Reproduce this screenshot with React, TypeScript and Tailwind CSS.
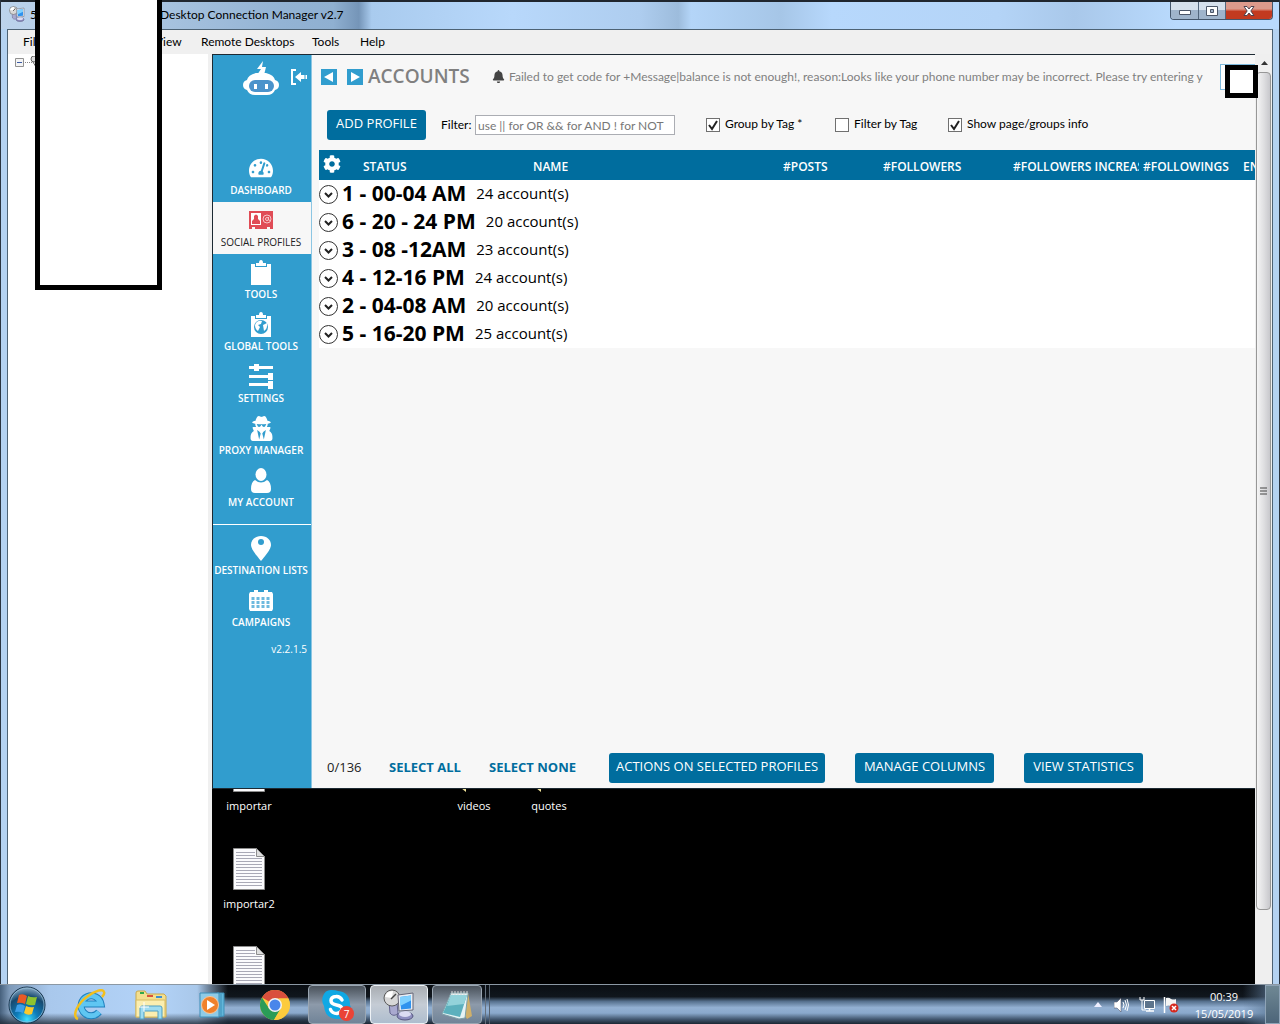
import type { ReactNode } from "react";
import { FaBell, FaCog, FaTachometerAlt, FaUserSecret } from "react-icons/fa";

/* ---------- icons ---------- */

function ConnectionIcon({ className }: { className: string }) {
  return (
    <svg viewBox="0 0 32 32" className={className} aria-hidden="true">
      <ellipse cx="22" cy="27" rx="8" ry="4" fill="#8f8fc0" stroke="#55557f" />
      <ellipse cx="22" cy="25" rx="6" ry="3" fill="#dcdcf2" />
      <path d="M6 13l8 1 1 10c-2 3-6 3-8 0z" fill="#a9a9cf" stroke="#62628c" />
      <circle cx="9" cy="9" r="8" fill="#d7d7d7" stroke="#5b5b5b" />
      <path d="M2 8a8 8 0 0 1 8-6l-1 7z" fill="#fff" />
      <path d="M8 10l5-5" stroke="#444" strokeWidth="1.5" />
      <path d="M15 6l15-2v17l-14 1z" fill="#e9eef5" stroke="#667" />
      <path d="M17 8l11-1.500v13l-10 1z" fill="#2f92ee" />
      <path d="M17 8l11-1.500v5L17 17z" fill="#7fd0ff" />
    </svg>
  );
}

function RobotIcon() {
  return (
    <svg viewBox="0 0 36 34" className="h-[34px] w-9" aria-hidden="true">
      <path d="M20 0l-6 8h4l-4 6h7l2-8h-4z" fill="#fff" />
      <path d="M13 12h10q8 2 9 7 4 1 4 5t-4 5q-2 5-8 5H12q-6 0-8-5-4-1-4-5t4-5q1-5 9-7z" fill="#fff" />
      <rect x="6" y="19" width="25" height="12" rx="6" fill="#4b93cb" />
      <rect x="11" y="23" width="3" height="5" fill="#fff" />
      <rect x="22" y="23" width="3" height="5" fill="#fff" />
    </svg>
  );
}

function CollapseIcon() {
  return (
    <svg viewBox="0 0 16 16" className="size-4" fill="#fff" aria-hidden="true">
      <path d="M0 0h5v2H2v12h3v2H0z" />
      <path d="M4 8l6-5v3h3v4h-3v3z" />
      <path d="M13.500 6h1v4h-1zM15 6h1v4h-1z" />
    </svg>
  );
}

function CardIcon() {
  return (
    <svg viewBox="0 0 24 19" className="h-[19px] w-6" aria-hidden="true">
      <path d="M0 0h24v18h-3v-2h-3v2H6v-2H3v2H0z" fill="#e04c56" />
      <path d="M2 2h10v12H2z" fill="#fff" />
      <path d="M5 5q2-3 4 0v3l2 2v3H3v-3l2-2z" fill="#e04c56" />
      <circle cx="18" cy="8" r="4" fill="none" stroke="#f6c5c8" />
      <circle cx="18" cy="8" r="1.500" fill="none" stroke="#f6c5c8" />
      <path d="M19.500 6v3l2 .5" fill="none" stroke="#f6c5c8" />
    </svg>
  );
}

function ClipboardIcon({ globe }: { globe?: boolean }) {
  return (
    <svg viewBox="0 0 22 25" className="h-[25px] w-[22px]" aria-hidden="true">
      <path d="M1 4h4v3h12V4h4v21H1z" fill="#fff" />
      <path d="M6 3h3q0-3 2-3t2 3h3v3H6z" fill="#fff" />
      {globe && (
        <>
          <circle cx="11" cy="15" r="7" fill="#319dce" />
          <path d="M5 13q2-5 7-4l-1 3-3 1 2 2-2 4q-3-2-3-6zM13 13l4-2q1 5-3 8z" fill="#fff" />
        </>
      )}
    </svg>
  );
}

function SlidersIcon() {
  return (
    <svg viewBox="0 0 24 25" className="h-[25px] w-6" fill="#fff" aria-hidden="true">
      <path d="M0 2h5V0h5v2h14v3H10v2H5V5H0zM0 11h19V9h5v7h-5v-2H0zM0 19h19v-2h5v8h-5v-3H0z" />
    </svg>
  );
}

function PersonIcon() {
  return (
    <svg viewBox="0 0 20 25" className="h-[25px] w-5" fill="#fff" aria-hidden="true">
      <ellipse cx="10" cy="6.500" rx="5.500" ry="6.500" />
      <path d="M4 12q6 5 12 0 4 2 4 9 0 4-4 4H4q-4 0-4-4 0-7 4-9z" />
    </svg>
  );
}

function PinIcon() {
  return (
    <svg viewBox="0 0 20 25" className="h-[25px] w-5" aria-hidden="true">
      <path d="M10 0c6 0 10 4 10 9 0 4-5 10-10 16C5 19 0 13 0 9c0-5 4-9 10-9z" fill="#fff" />
      <circle cx="10" cy="6" r="3" fill="#319dce" />
    </svg>
  );
}

function CalendarIcon() {
  return (
    <svg viewBox="0 0 24 21" className="h-[21px] w-6" aria-hidden="true">
      <path d="M1 2h4V0h4v2h6V0h4v2h4l1 2v15l-1 2H1l-1-2V4z" fill="#fff" />
      <path
        d="M4 7v3M9 7v3M14 7v3M19 7v3M4 11v3M9 11v3M14 11v3M19 11v3M4 15v3M9 15v3M14 15v3M19 15v3"
        stroke="#6db9de"
        strokeWidth="3"
      />
    </svg>
  );
}

function TextFileIcon() {
  return (
    <svg viewBox="0 0 32 42" className="h-[42px] w-8 shrink-0" aria-hidden="true">
      <path d="M.5.500h23l8 8v33H.5z" fill="#fbfbfd" stroke="#8d8d8d" />
      <path d="M23.500.500v8h8z" fill="#dedede" stroke="#8d8d8d" />
      <path
        d="M3 4.500h19M3 7.500h19M3 10.500h26M3 13.500h26M3 16.500h26M3 19.500h26M3 22.500h26M3 25.500h26M3 28.500h26M3 31.500h26M3 34.500h26M3 37.500h26"
        stroke="#a9a9b6"
      />
    </svg>
  );
}

function FolderTip() {
  return (
    <svg viewBox="0 0 32 42" className="h-[42px] w-8 shrink-0" aria-hidden="true">
      <path d="M3 38h5v4z" fill="#f1e39a" />
    </svg>
  );
}

function StartOrb() {
  return (
    <svg viewBox="0 0 38 38" className="size-[38px]" aria-hidden="true">
      <defs>
        <radialGradient id="orb" cx="50%" cy="90%" r="85%">
          <stop offset="0" stopColor="#3fe0ff" />
          <stop offset=".35" stopColor="#0d7dbb" />
          <stop offset=".75" stopColor="#174a70" />
          <stop offset="1" stopColor="#7a9cb8" />
        </radialGradient>
      </defs>
      <circle cx="19" cy="19" r="18" fill="url(#orb)" stroke="#16324a" />
      <circle cx="19" cy="19" r="17" fill="none" stroke="#9cc4de" strokeOpacity=".7" />
      <path d="M11 9q4-2 8 1l-2 8q-4-2-8-1z" fill="#ea5a24" />
      <path d="M20 10q4 2 9 1l-2 8q-5 1-9-1z" fill="#8fc32f" />
      <path d="M9 19q4-2 8 1l-2 7q-4-2-8-1z" fill="#3c9ee8" />
      <path d="M18 20q4 2 8 1l-2 7q-4 2-8-1z" fill="#fcc92c" />
    </svg>
  );
}

function ExplorerE() {
  return (
    <svg viewBox="0 0 32 32" className="size-8" fill="none" aria-hidden="true">
      <path d="M25 23a10 10 0 1 1 2-8H9" stroke="#1f80bd" strokeWidth="7" />
      <path d="M25 23a10 10 0 1 1 2-8H9" stroke="#5fc6f2" strokeWidth="5" />
      <path d="M4 30C-3 27 4 14 14 7c7-5 15-8 16-4 1 2-1 4-2 5" stroke="#f2bf1e" strokeWidth="2.500" />
    </svg>
  );
}

function FoldersIcon() {
  return (
    <svg viewBox="0 0 32 30" className="h-[30px] w-8" aria-hidden="true">
      <path d="M1 3q0-2 2-2h7l2 3h17l2 2v21H1z" fill="#f3df8f" stroke="#c9a94c" />
      <path d="M5 2h4v2H5z" fill="#2fa84b" />
      <path d="M12 5h6v2h-6z" fill="#d9533b" />
      <path d="M21 6h6v2h-6z" fill="#3f8fd0" />
      <path d="M1 10h29v17H1z" fill="#fbeeb0" stroke="#d7bb63" />
      <path d="M5 29V18q0-2 2-2h18q2 0 2 2v11h-4v-8H9v8z" fill="#9edcf1" stroke="#4e9fc2" />
      <path d="M9 12v10M4 17h10" stroke="#fff" />
    </svg>
  );
}

function PlayerIcon() {
  return (
    <svg viewBox="0 0 28 26" className="h-[26px] w-7" aria-hidden="true">
      <path d="M18 1h7v23l-7 1z" fill="#62b6da" stroke="#3d8fb8" />
      <path d="M1 1h19v24H1zM22 2v22" fill="#8fcbe6" stroke="#3d8fb8" />
      <circle cx="11" cy="13" r="8.500" fill="#f0812a" stroke="#f8c69a" />
      <path d="M8 8l8 5-8 5z" fill="#fff" />
    </svg>
  );
}

function ChromeLogo() {
  return (
    <svg viewBox="0 0 30 30" className="size-[30px]" aria-hidden="true">
      <circle cx="15" cy="15" r="15" fill="#fccb3d" />
      <path d="M15 15L2 7.500A15 15 0 0 1 28 7.500L28.500 8.500H15z" fill="#d94f3d" />
      <path d="M2 7.500A15 15 0 0 0 14 30L20.800 18.500 9 18.500z" fill="#2a9c57" />
      <path d="M28.300 8.500A15 15 0 0 1 14 30L20.800 18.500 19 8.500z" fill="#fccb3d" />
      <circle cx="15" cy="15" r="7" fill="#f3f3f3" />
      <circle cx="15" cy="15" r="5.500" fill="#4a86ea" />
    </svg>
  );
}

function SkypeLogo() {
  return (
    <svg viewBox="0 0 30 30" className="size-[30px]" aria-hidden="true">
      <path d="M9 0q5 0 7 1 12 1 12 14 2 3 1 7-2 8-11 7Q3 30 2 16-1 11 1 6q2-6 8-6z" fill="#10a8e4" />
      <path
        d="M20 10q-2-4-6-3.500-5 .5-5 4t5.500 4.500 5.500 4-5 4.500q-5 0-6.500-4"
        fill="none"
        stroke="#fff"
        strokeWidth="3.500"
        strokeLinecap="round"
      />
    </svg>
  );
}

function NotepadIcon() {
  return (
    <svg viewBox="0 0 32 32" className="size-8" aria-hidden="true">
      <path d="M27 4l4 23-5 3-3-5z" fill="#d0b06a" />
      <path d="M10 4h17l-3 25-6 1L1 25z" fill="#e6f3f5" stroke="#7da0a8" />
      <path d="M10 6h16l-7 22L2 24z" fill="#5cb0bd" />
      <path d="M10 6h16l-3 9-17 2z" fill="#93d2da" />
      <path d="M11 2v4M14 2v4M17 2v4M20 2v4M23 2v4M26 2v4" stroke="#d6d6d6" />
    </svg>
  );
}

/* ---------- data ---------- */

const mainLinks: { label: string; icon: ReactNode; active?: boolean }[] = [
  { label: "DASHBOARD", icon: <FaTachometerAlt size={24} /> },
  { label: "SOCIAL PROFILES", icon: <CardIcon />, active: true },
  { label: "TOOLS", icon: <ClipboardIcon /> },
  { label: "GLOBAL TOOLS", icon: <ClipboardIcon globe /> },
  { label: "SETTINGS", icon: <SlidersIcon /> },
  { label: "PROXY MANAGER", icon: <FaUserSecret size={25} /> },
  { label: "MY ACCOUNT", icon: <PersonIcon /> },
];

const listLinks = [
  { label: "DESTINATION LISTS", icon: <PinIcon /> },
  { label: "CAMPAIGNS", icon: <CalendarIcon /> },
];

const groups = [
  { name: "1 - 00-04 AM", count: 24 },
  { name: "6 - 20 - 24 PM", count: 20 },
  { name: "3 - 08 -12AM", count: 23 },
  { name: "4 - 12-16 PM", count: 24 },
  { name: "2 - 04-08 AM", count: 20 },
  { name: "5 - 16-20 PM", count: 25 },
];

/* ---------- pieces ---------- */

function NavLink({ label, icon, active }: { label: string; icon: ReactNode; active?: boolean }) {
  return (
    <a
      href="#"
      className={
        active
          ? "flex h-[52px] flex-col items-center bg-[#f7f7f7] pr-0.5 text-[10px] text-[#222]"
          : "flex h-[52px] flex-col items-center pr-0.5 text-[10px] font-semibold text-white"
      }
    >
      <span className="flex h-8 items-center justify-center pt-1">{icon}</span>
      <span className="leading-4 whitespace-nowrap">{label}</span>
    </a>
  );
}

function CheckOption({ label, className, checked }: { label: string; className: string; checked?: boolean }) {
  return (
    <label className={`flex shrink-0 items-center gap-[5px] whitespace-nowrap ${className}`}>
      <span className="grid shrink-0 pt-0.5">
        <input
          type="checkbox"
          defaultChecked={checked}
          className="peer col-start-1 row-start-1 size-3.5 appearance-none border border-[#707070] bg-white"
        />
        <svg
          viewBox="0 0 14 14"
          className="pointer-events-none invisible col-start-1 row-start-1 size-3.5 peer-checked:visible"
          aria-hidden="true"
        >
          <path d="M3 7l3 4 5-8" fill="none" stroke="#222" strokeWidth="2" />
        </svg>
      </span>
      {label}
    </label>
  );
}

function BlueButton({ children, className }: { children: ReactNode; className: string }) {
  return (
    <button
      className={`h-[30px] shrink-0 rounded-[3px] bg-[#006d9e] pb-0.5 font-['Open_Sans',sans-serif] text-[13px] whitespace-nowrap text-white ${className}`}
    >
      {children}
    </button>
  );
}

function DesktopFile({ label, icon, className }: { label: string; icon: ReactNode; className: string }) {
  return (
    <div className={`absolute flex w-[74px] flex-col items-center gap-1.5 text-[11px] leading-4 text-white ${className}`}>
      {icon}
      <span>{label}</span>
    </div>
  );
}

function TitleBar() {
  return (
    <header className="flex h-[29px] shrink-0 items-start border-t-2 border-[#20262e] bg-[linear-gradient(90deg,#bcd3ec_0%,#a9c4e0_12%,#93b3d4_22%,#8fb0d1_26%,#7595b8_28%,#a9cbee_29%,#b8d8fb_40%,#aecdef_50%,#9dbcdc_53%,#b4d5f8_54%,#a6c6e7_61%,#b7d8fc_65%,#b4d4f7_78%,#a9c8ea_84%,#b9dafd_92%)] pr-1.5 pl-2">
      <ConnectionIcon className="mt-1 size-4 shrink-0" />
      <h1 className="flex flex-1 pl-[5px] font-[Lato,sans-serif] text-[12px] leading-[26px] text-black">
        <span className="w-[130px]">5</span>
        <span className="whitespace-nowrap">Desktop Connection Manager v2.7</span>
      </h1>
      <div className="flex h-[18px] overflow-hidden rounded-b border border-t-0 border-[#44566b]">
        <button aria-label="Minimize" className="grid w-7 place-items-center border-r border-[#53677d] bg-linear-to-b from-[#d5e0ec] from-45% to-[#9fb4cb] to-50%">
          <svg viewBox="0 0 12 5" className="mt-1 h-[5px] w-3" aria-hidden="true">
            <path d="M.5.500h11v4H.5z" fill="#fff" stroke="#4b5668" />
          </svg>
        </button>
        <button aria-label="Restore" className="grid w-[27px] place-items-center border-r border-[#53677d] bg-linear-to-b from-[#d5e0ec] from-45% to-[#9fb4cb] to-50%">
          <svg viewBox="0 0 12 10" className="h-2.5 w-3" aria-hidden="true">
            <path d="M.5.500h11v9H.5z" fill="#fff" stroke="#4b5668" />
            <path d="M4.500 3.500h3v3h-3z" fill="#a3b4c9" stroke="#4b5668" />
          </svg>
        </button>
        <button aria-label="Close" className="grid w-[46px] place-items-center bg-linear-to-b from-[#dc9a8c] from-40% to-[#c23a20] to-55%">
          <svg viewBox="0 0 12 10" className="h-2.5 w-3" aria-hidden="true">
            <path d="M1 .5h3l2 2.500L8 .5h3L7.800 5 11 9.500H8L6 7 4 9.500H1L4.200 5z" fill="#fff" stroke="#4d4350" />
          </svg>
        </button>
      </div>
    </header>
  );
}

function Sidebar() {
  return (
    <aside className="flex w-[99px] shrink-0 flex-col border-r border-[#8cc6e3] bg-[#319dce]">
      <div className="flex h-[95px] shrink-0 items-start gap-3 pt-1.5 pl-[30px]">
        <RobotIcon />
        <button aria-label="Collapse menu" className="pt-2">
          <CollapseIcon />
        </button>
      </div>
      <nav className="flex flex-col">
        {mainLinks.map((link) => (
          <NavLink key={link.label} {...link} />
        ))}
        <hr className="mt-2.5 mb-[5px] border-white" />
        {listLinks.map((link) => (
          <NavLink key={link.label} {...link} />
        ))}
      </nav>
      <span className="pt-[7px] pr-1 text-right text-[10px] leading-4 text-white">v2.2.1.5</span>
    </aside>
  );
}

function ProfileTable() {
  const th = "overflow-hidden pt-1 text-left font-semibold whitespace-nowrap";
  return (
    <table className="w-full table-fixed bg-white">
      <thead>
        <tr className="h-[30px] bg-[#006d9e] text-[12px] text-white">
          <th className="w-11 pl-1 text-left">
            <button aria-label="Column settings" className="block pb-0.5">
              <FaCog size={18} />
            </button>
          </th>
          <th className={`w-[170px] ${th}`}>STATUS</th>
          <th className={`w-[250px] ${th}`}>NAME</th>
          <th className={`w-[100px] ${th}`}>#POSTS</th>
          <th className={`w-[130px] ${th}`}>#FOLLOWERS</th>
          <th className={`w-[130px] pr-1 ${th}`}>
            <div className="overflow-hidden">#FOLLOWERS INCREASE</div>
          </th>
          <th className={`w-[100px] ${th}`}>#FOLLOWINGS</th>
          <th className={th}>EN</th>
        </tr>
      </thead>
      <tbody>
        {groups.map((group) => (
          <tr key={group.name} className="h-7">
            <td colSpan={8}>
              <div className="flex items-center text-black">
                <button aria-label={`Expand ${group.name}`}>
                  <svg viewBox="0 0 19 19" className="size-[19px]" fill="none" aria-hidden="true">
                    <circle cx="9.500" cy="9.500" r="9" stroke="#333" />
                    <path d="M6 8l3.500 3.500L13 8" stroke="#222" strokeWidth="2" />
                  </svg>
                </button>
                <span className="pb-0.5 pl-1 text-[21px] leading-[26px] font-bold">{group.name}</span>
                <span className="pb-0.5 pl-2.5 text-[15px] leading-[26px]">{group.count} account(s)</span>
              </div>
            </td>
          </tr>
        ))}
      </tbody>
    </table>
  );
}

function AccountsPage() {
  return (
    <main className="flex min-w-0 flex-1 flex-col bg-[#f7f7f7]">
      <div className="flex h-[45px] shrink-0 items-center pb-0.5 pl-[9px]">
        <button aria-label="Back" className="grid size-4 place-items-center bg-[#319dce]">
          <svg viewBox="0 0 10 10" className="size-2.5" aria-hidden="true">
            <path d="M0 5l9-5v10z" fill="#fff" />
          </svg>
        </button>
        <button aria-label="Forward" className="ml-2.5 grid size-4 place-items-center bg-[#319dce]">
          <svg viewBox="0 0 10 10" className="size-2.5" aria-hidden="true">
            <path d="M10 5L1 0v10z" fill="#fff" />
          </svg>
        </button>
        <h2 className="w-[129px] pl-[5px] text-[19px] font-semibold text-[#808080]">ACCOUNTS</h2>
        <FaBell size={13} className="shrink-0 text-[#444]" />
        <p className="ml-1 min-w-0 flex-1 overflow-hidden font-[Lato,sans-serif] text-[12px] whitespace-nowrap text-[#808080]">
          Failed to get code for +Message|balance is not enough!, reason:Looks like your phone number may be incorrect. Please try entering y
        </p>
        <input aria-label="Search" className="ml-2.5 h-[26px] w-[35px] border border-r-0 border-[#7db9dc] bg-white px-1" />
      </div>

      <div className="flex h-[50px] shrink-0 items-center pl-[15px] font-[Lato,sans-serif] text-[12px] text-black">
        <BlueButton className="w-[99px]">ADD PROFILE</BlueButton>
        <label htmlFor="filter" className="w-[49px] shrink-0 pl-[15px]">
          Filter:
        </label>
        <input
          id="filter"
          placeholder="use || for OR && for AND ! for NOT"
          className="h-5 w-[200px] shrink-0 border border-[#abadb3] bg-white px-0.5 text-[12px] placeholder:text-[#777]"
        />
        <div className="flex gap-[31px] pb-0.5 pl-[31px]">
          <CheckOption label="Group by Tag *" className="w-[98px]" checked />
          <CheckOption label="Filter by Tag" className="w-[82px]" />
          <CheckOption label="Show page/groups info" className="w-[145px]" checked />
        </div>
      </div>

      <div className="min-h-0 flex-1 overflow-hidden pl-[7px]">
        <ProfileTable />
      </div>

      <footer className="flex shrink-0 items-center pb-[5px] pl-[15px] text-[13px]">
        <span className="w-[62px] text-[#222]">0/136</span>
        <button className="w-[100px] text-left font-bold whitespace-nowrap text-[#006d9e]">SELECT ALL</button>
        <button className="w-[120px] text-left font-bold whitespace-nowrap text-[#006d9e]">SELECT NONE</button>
        <div className="flex gap-[30px]">
          <BlueButton className="w-[216px]">ACTIONS ON SELECTED PROFILES</BlueButton>
          <BlueButton className="w-[139px]">MANAGE COLUMNS</BlueButton>
          <BlueButton className="w-[119px]">VIEW STATISTICS</BlueButton>
        </div>
      </footer>
    </main>
  );
}

function ScrollBar() {
  return (
    <div className="flex w-[17px] shrink-0 flex-col bg-[#efefef] pl-px">
      <button aria-label="Scroll up" className="grid h-[18px] shrink-0 place-items-center">
        <svg viewBox="0 0 7 4" className="h-1 w-[7px]" aria-hidden="true">
          <path d="M0 4l3.500-4L7 4z" fill="#333" />
        </svg>
      </button>
      <div className="mr-px grid flex-[839] place-items-center rounded-sm border border-[#979797] bg-linear-to-r from-[#f5f5f5] via-[#e0e0e2] to-[#c8c8cc]">
        <svg viewBox="0 0 7 8" className="h-2 w-[7px]" aria-hidden="true">
          <path d="M0 1h7M0 4h7M0 7h7" stroke="#444" />
        </svg>
      </div>
      <div className="flex-[74]" />
    </div>
  );
}

function Taskbar() {
  const task = "grid shrink-0 place-items-center rounded-sm border";
  return (
    <footer className="flex h-10 shrink-0 items-stretch border-t border-[#8b98a4] bg-[linear-gradient(180deg,#0a0e13_0%,#10161d_30%,#56708d_42%,#93b0d2_58%,#8aa9cc_72%,#41566e_88%,#1b2632_100%)]">
      <div className="flex w-[308px] shrink-0 items-center bg-[linear-gradient(180deg,transparent_72%,#1b2632cc_100%),linear-gradient(90deg,#46607c_0%,#7d99b8_3%,#a9c8ec_16%,#b3d3f8_50%,#a9c8ea_64%,transparent_74%)]">
        <button aria-label="Start" className="ml-2">
          <StartOrb />
        </button>
        <button aria-label="Internet Explorer" className="ml-7">
          <ExplorerE />
        </button>
        <button aria-label="Explorer" className="ml-[29px]">
          <FoldersIcon />
        </button>
        <button aria-label="Media Player" className="ml-8">
          <PlayerIcon />
        </button>
        <button aria-label="Chrome" className="ml-[33px]">
          <ChromeLogo />
        </button>
      </div>
      <button aria-label="Skype" className={`${task} relative w-[58px] border-[#9aa6b2] bg-linear-to-b from-[#4a525b] via-[#8d9aaa] to-[#718498]`}>
        <SkypeLogo />
        <span className="absolute top-5 left-[30px] grid size-[15px] place-items-center rounded-full bg-[#ea4336] text-[10px] leading-none text-white">
          7
        </span>
      </button>
      <button aria-label="Connection Manager" className={`${task} ml-1 w-[58px] border-[#eef2f6] bg-linear-to-b from-[#a9adb2] via-[#c5ccd5] to-[#aebdce]`}>
        <ConnectionIcon className="size-8" />
      </button>
      <button aria-label="Notepad" className={`${task} ml-1 w-[50px] border-[#9aa6b2] bg-linear-to-b from-[#4a525b] via-[#8d9aaa] to-[#718498]`}>
        <NotepadIcon />
      </button>
      <div className="w-1 border-r border-[#66727f]" />
      <div className="w-1 border-r border-[#56626f]" />
      <div className="ml-auto flex items-center bg-[linear-gradient(90deg,transparent_80%,#5a7592_100%)]">
        <button aria-label="Show hidden icons" className="mr-3">
          <svg viewBox="0 0 8 5" className="h-[5px] w-2" aria-hidden="true">
            <path d="M0 5l4-5 4 5z" fill="#eef" />
          </svg>
        </button>
        <button aria-label="Volume" className="mr-2.5">
          <svg viewBox="0 0 15 14" className="h-3.5 w-[15px]" fill="none" stroke="#fff" aria-hidden="true">
            <path d="M0 4h3l4-4v14l-4-4H0z" fill="#fff" stroke="#445" strokeWidth=".5" />
            <path d="M9 4q2 3 0 6M11 2q3 5 0 10M13 1q3 6 0 12" />
          </svg>
        </button>
        <button aria-label="Network" className="mr-2">
          <svg viewBox="0 0 16 15" className="h-[15px] w-4" fill="none" stroke="#fff" aria-hidden="true">
            <path d="M1 0v3h4V0M3 3v10h4" />
            <path d="M5.500 3.500h10v8h-10z" fill="#5d748c" />
            <path d="M7 14h8M10.500 12v2" strokeWidth="1.500" />
          </svg>
        </button>
        <button aria-label="Action center" className="mr-3.5">
          <svg viewBox="0 0 16 16" className="size-4" aria-hidden="true">
            <path d="M1.500 0v16" stroke="#fff" strokeWidth="1.500" />
            <path d="M3 1q3-1 5 1 3 1 5 0v7q-3 1-5 0-2-1-5 0z" fill="#f4f4f4" />
            <circle cx="11" cy="11" r="4.500" fill="#d5281e" />
            <path d="M9 9l4 4M13 9l-4 4" stroke="#fff" strokeWidth="1.500" />
          </svg>
        </button>
        <time className="flex w-[62px] flex-col items-center text-[11px] leading-[17px] whitespace-nowrap text-white">
          <span>00:39</span>
          <span>15/05/2019</span>
        </time>
        <button aria-label="Show desktop" className="ml-2.5 h-full w-[15px] border border-[#8ea3b6] bg-linear-to-b from-[#6f8894] to-[#4d6579]" />
      </div>
    </footer>
  );
}

export default function App() {
  return (
    <div className="flex h-screen flex-col overflow-hidden bg-black font-['Open_Sans','Noto_Sans',sans-serif]">
      <div className="relative flex min-h-0 flex-1 flex-col border-x border-[#2a3440] bg-[#b4d2f1]">
        <TitleBar />
        <div className="mx-1.5 flex min-h-0 flex-1 flex-col border border-b-0 border-[#4d6274] bg-[#f0f0f0]">
          <nav className="flex h-6 shrink-0 items-center pl-[15px] font-[Lato,sans-serif] text-[12px] text-black">
            <button className="w-[132px] text-left">File</button>
            <button className="w-[46px] text-left">View</button>
            <button className="w-[111px] text-left whitespace-nowrap">Remote Desktops</button>
            <button className="w-12 text-left">Tools</button>
            <button>Help</button>
          </nav>

          <div className="flex min-h-0 flex-1">
            {/* Server tree */}
            <div className="mr-1 flex w-[200px] shrink-0 items-start bg-white pt-0.5 pl-[7px]">
              <svg viewBox="0 0 24 14" className="h-3.5 w-6" fill="none" aria-hidden="true">
                <path d="M.5 2.500h8v8h-8z" fill="#f4f4f4" stroke="#919191" />
                <path d="M2 6.500h5" stroke="#3b5ba5" />
                <path d="M10 6.500h7" stroke="#888" strokeDasharray="1 1" />
                <circle cx="19" cy="3" r="3" fill="#ddd" stroke="#666" />
                <path d="M18 6l3 5" stroke="#666" />
              </svg>
            </div>

            {/* Remote session */}
            <div className="flex min-w-0 flex-1 flex-col bg-black">
              <div className="flex min-h-0 flex-1 border border-r-0 border-[#1d2a33]">
                <Sidebar />
                <AccountsPage />
              </div>
              <div className="relative h-[195px] shrink-0 overflow-hidden">
                <DesktopFile label="importar" icon={<TextFileIcon />} className="-top-[39px] left-0" />
                <DesktopFile label="videos" icon={<FolderTip />} className="-top-[39px] left-[225px]" />
                <DesktopFile label="quotes" icon={<FolderTip />} className="-top-[39px] left-[300px]" />
                <DesktopFile label="importar2" icon={<TextFileIcon />} className="top-[59px] left-0" />
                <DesktopFile label="" icon={<TextFileIcon />} className="top-[157px] left-0" />
              </div>
            </div>
            <ScrollBar />
          </div>
        </div>

        {/* Boxes hiding private details */}
        <div className="absolute top-0 left-[34px] h-[290px] w-[127px] border-[5px] border-t-0 border-black bg-white" />
        <div className="absolute top-[65px] right-[21px] size-[33px] border-[5px] border-black bg-white" />
      </div>
      <Taskbar />
    </div>
  );
}
